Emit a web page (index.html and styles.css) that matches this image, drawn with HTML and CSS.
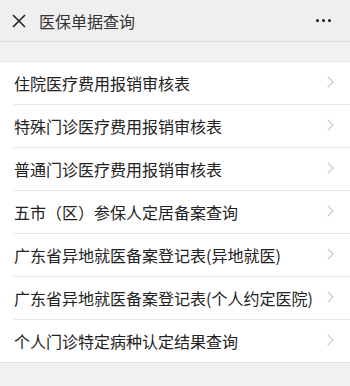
FILE: index.html
```html
<!DOCTYPE html>
<html lang="zh-CN">
<head>
    <meta charset="UTF-8">
    <meta name="viewport" content="width=device-width, initial-scale=1.0">
    <title>医保单据查询</title>
    <link rel="stylesheet" href="styles.css">
</head>
<body>
    <div class="topbar">
        <svg class="close" width="14" height="14" viewBox="0 0 14 14">
            <path d="M1 1 L13 13 M13 1 L1 13" stroke="#222" stroke-width="1.6" fill="none"/>
        </svg>
        <span class="title">医保单据查询</span>
        <span class="more"><i></i><i></i><i></i></span>
    </div>

    <ul class="menu">
        <li>住院医疗费用报销审核表</li>
        <li>特殊门诊医疗费用报销审核表</li>
        <li>普通门诊医疗费用报销审核表</li>
        <li>五市（区）参保人定居备案查询</li>
        <li>广东省异地就医备案登记表(异地就医)</li>
        <li>广东省异地就医备案登记表(个人约定医院)</li>
        <li>个人门诊特定病种认定结果查询</li>
    </ul>
</body>
</html>
```

FILE: styles.css
```css
body {
    margin: 0;
    background-color: #f1f1f1;
    font-family: "Noto Sans CJK SC", "Noto Sans", sans-serif;
    color: #222;
}

.topbar {
    height: 41px;
    background-color: #efefef;
    border-bottom: 1px solid #dcdcdc;
    display: flex;
    align-items: center;
    padding: 0 19px 0 12px;
}

.close {
    flex-shrink: 0;
    margin-right: 13px;
}

.title {
    font-size: 16px;
    color: #333;
    flex-grow: 1;
}

.more {
    display: flex;
    gap: 3px;
}

.more i {
    width: 3px;
    height: 3px;
    border-radius: 50%;
    background-color: #111;
}

.menu {
    list-style: none;
    margin: 19px 0 0;
    padding: 0 0 0 14px;
    background-color: #fff;
    border-top: 1px solid #e6e6e6;
    border-bottom: 1px solid #dedede;
}

.menu li {
    height: 42px;
    display: flex;
    align-items: center;
    font-size: 16px;
    border-bottom: 1px solid #e6e6e6;
    position: relative;
}

.menu li:last-child {
    border-bottom: none;
}

.menu li::after {
    content: "";
    position: absolute;
    right: 18px;
    top: 50%;
    width: 7px;
    height: 7px;
    margin-top: -5px;
    border-top: 1.5px solid #c4c4c4;
    border-right: 1.5px solid #c4c4c4;
    transform: rotate(45deg);
}
```
